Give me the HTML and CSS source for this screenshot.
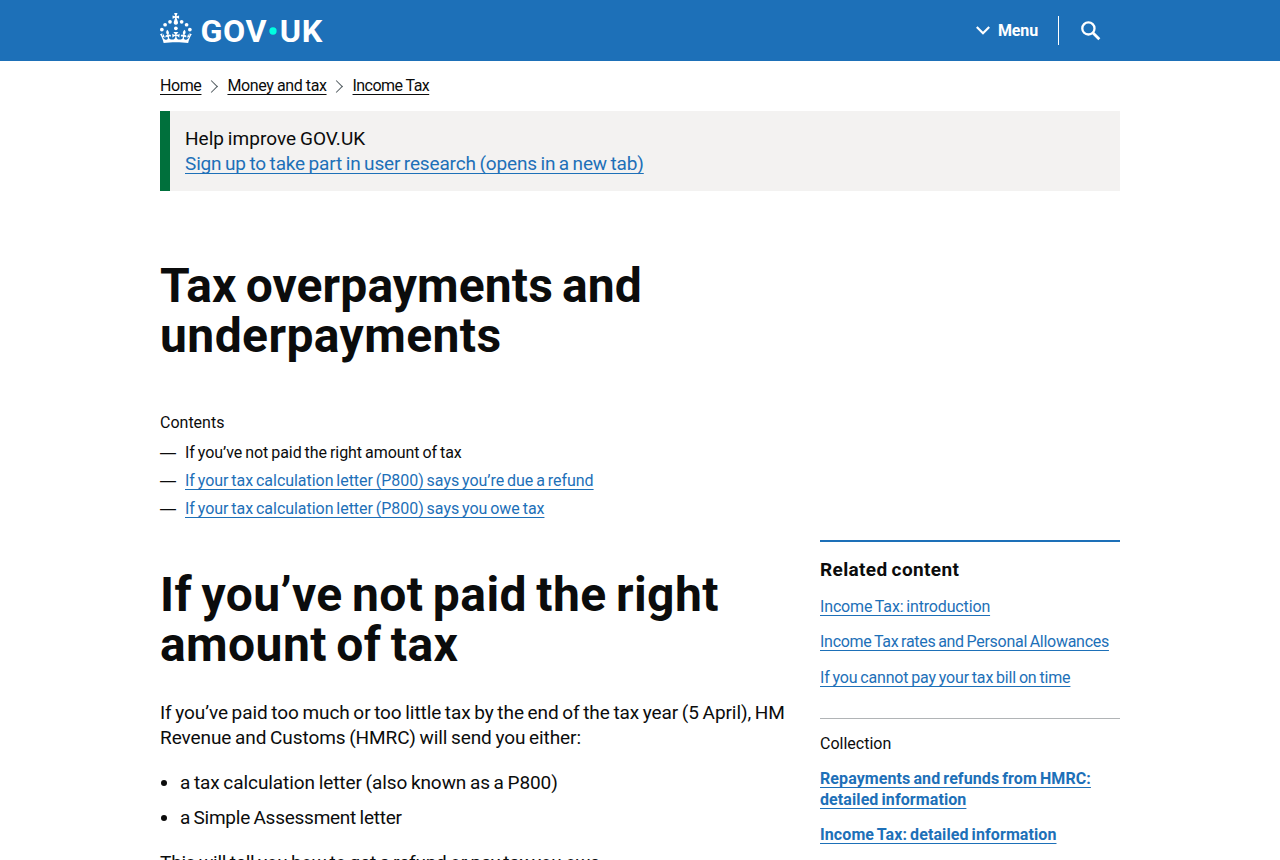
FILE: index.html
```
<!DOCTYPE html>
<html lang="en">
<head>
    <meta charset="UTF-8">
    <meta name="viewport" content="width=device-width, initial-scale=1.0">
    <title>Tax overpayments and underpayments - GOV.UK</title>
    <link rel="stylesheet" href="styles.css">
</head>
<body>
    <header class="header">
        <div class="container header-inner">
            <a class="logo" href="#">
                <svg width="164" height="30" viewBox="0 0 328 60" fill="#fff" role="img">
                    <!-- Crown -->
                    <circle cx="20" cy="17.6" r="3.7"/>
                    <circle cx="10.2" cy="23.5" r="3.7"/>
                    <circle cx="3.7" cy="33.2" r="3.7"/>
                    <circle cx="31.7" cy="30.6" r="3.7"/>
                    <circle cx="43.3" cy="17.6" r="3.7"/>
                    <circle cx="53.2" cy="23.5" r="3.7"/>
                    <circle cx="59.7" cy="33.2" r="3.7"/>
                    <path d="M33.1,9.8c.2-.1.3-.3.5-.5l4.6,2.4v-6.8l-4.6,1.5c-.1-.2-.3-.3-.5-.5l1.9-5.9h-6.7l1.9,5.9c-.2.1-.3.3-.5.5l-4.6-1.5v6.8l4.6-2.4c.1.2.3.3.5.5l-2.6,8c-.9,2.8,1.2,5.7,4.1,5.7h0c3,0,5.1-2.9,4.1-5.7l-2.6-8ZM37,37.9s-3.4,3.8-4.1,6.1c2.2,0,4.2-.5,6.4-2.8l-.7,8.5c-2-2.8-4.4-4.1-5.7-3.8.1,3.1.5,6.7,5.8,7.2,3.7.3,6.7-1.5,7-3.8.4-2.6-2-4.3-3.7-1.6-1.4-4.5,2.4-6.1,4.9-3.2-1.9-4.5-1.8-7.7,2.4-10.9,3,4,2.6,7.3-1.2,11.1,2.4-1.3,6.2,0,4,4.6-1.2-2.8-3.7-2.2-4.2.2-.3,1.7.7,3.7,3,4.2,1.9.3,4.7-.9,7-5.9-1.3,0-2.4.7-3.9,1.7l2.4-8c.6,2.3,1.4,3.7,2.2,4.5.6-1.6.5-2.8,0-5.3l5,1.8c-2.6,3.6-5.2,8.7-7.3,17.5-7.4-1.1-15.7-1.7-24.5-1.7h0c-8.8,0-17.1.6-24.5,1.7-2.1-8.9-4.7-13.9-7.3-17.5l5-1.8c-.5,2.5-.6,3.7,0,5.3.8-.8,1.6-2.3,2.2-4.5l2.4,8c-1.5-1-2.6-1.7-3.9-1.7,2.3,5,5.2,6.2,7,5.9,2.3-.4,3.3-2.4,3-4.2-.5-2.4-3-3.1-4.2-.2-2.2-4.6,1.6-6,4-4.6-3.7-3.7-4.2-7.1-1.2-11.1,4.2,3.2,4.3,6.4,2.4,10.9,2.5-2.8,6.3-1.3,4.9,3.2-1.8-2.7-4.1-1-3.7,1.6.3,2.3,3.3,4.1,7,3.8,5.4-.5,5.7-4.2,5.8-7.2-1.3-.2-3.7,1-5.7,3.8l-.7-8.5c2.2,2.3,4.2,2.7,6.4,2.8-.7-2.3-4.1-6.1-4.1-6.1h10.6,0Z"/>
                    <text class="logo-text" x="81" y="57" textLength="133" lengthAdjust="spacingAndGlyphs">GOV</text>
                    <circle cx="226" cy="36" r="7.3" fill="#00ffe0"/>
                    <text class="logo-text" x="239.5" y="57" textLength="86" lengthAdjust="spacingAndGlyphs">UK</text>
                </svg>
            </a>
            <nav class="header-nav">
                <a class="menu-link" href="#">
                    <svg width="14" height="9" viewBox="0 0 14 9" fill="none" stroke="#fff" stroke-width="2.2">
                        <path d="M0.8 1L7 7.2L13.2 1"/>
                    </svg>
                    <span>Menu</span>
                </a>
                <a class="search-link" href="#">
                    <svg width="20" height="20" viewBox="0 0 20 20" fill="none" stroke="#fff">
                        <circle cx="7.4" cy="7.4" r="6.1" stroke-width="2.3"/>
                        <path d="M11.8 11.8L18.3 18.3" stroke-width="2.8"/>
                    </svg>
                </a>
            </nav>
        </div>
    </header>

    <div class="container">
        <ol class="breadcrumbs">
            <li><a href="#">Home</a></li>
            <li><a href="#">Money and tax</a></li>
            <li><a class="crumb-last" href="#">Income Tax</a></li>
        </ol>

        <section class="banner">
            <h2>Help improve GOV.UK</h2>
            <a class="link" href="#">Sign up to take part in user research (opens in a new tab)</a>
        </section>

        <div class="intro">
            <h1 class="title"><span class="title-first">Tax overpayments and</span> underpayments</h1>
            <nav class="contents">
                <h2>Contents</h2>
                <ol>
                    <li>If you’ve not paid the right amount of tax</li>
                    <li><a class="link" href="#">If your tax calculation letter (P800) says you’re due a refund</a></li>
                    <li><a class="link" href="#">If your tax calculation letter (P800) says you owe tax</a></li>
                </ol>
            </nav>
        </div>

        <div class="columns">
            <main class="guide">
                <h1 class="part-title">If you’ve not paid the right amount of tax</h1>
                <p>If you’ve paid too much or too little tax by the end of the tax year (5 April), HM Revenue and Customs (HMRC) will send you either:</p>
                <ul>
                    <li>a tax calculation letter (also known as a P800)</li>
                    <li class="assessment">a Simple Assessment letter</li>
                </ul>
                <p class="next">This will tell you how to get a refund or pay tax you owe.</p>
            </main>

            <aside class="related">
                <h2>Related content</h2>
                <ul class="related-links">
                    <li><a class="link" href="#">Income Tax: introduction</a></li>
                    <li><a class="link allowances" href="#">Income Tax rates and Personal Allowances</a></li>
                    <li><a class="link" href="#">If you cannot pay your tax bill on time</a></li>
                </ul>
                <h3>Collection</h3>
                <ul class="collection-links">
                    <li><a class="link" href="#">Repayments and refunds from HMRC: detailed information</a></li>
                    <li><a class="link" href="#">Income Tax: detailed information</a></li>
                </ul>
            </aside>
        </div>
    </div>
</body>
</html>
```
FILE: styles.css
```
* {
    box-sizing: border-box;
}
body {
    margin: 0;
    height: 860px;
    overflow: hidden;
    font-family: Roboto, "Liberation Sans", sans-serif;
    font-size: 16px;
    line-height: 20px;
    color: #0b0c0c;
    background-color: #fff;
}
h1, h2, h3, p, ul, ol {
    margin: 0;
    padding: 0;
}
ol {
    list-style: none;
}
a {
    text-decoration: underline;
    text-decoration-thickness: 1px;
    text-underline-offset: 3px;
    text-decoration-skip-ink: none;
}
.link {
    color: #1d70b8;
}
.container {
    width: 960px;
    margin: 0 auto;
}

/* Header */
.header {
    height: 61px;
    background-color: #1d70b8;
}
.header-inner {
    display: flex;
    justify-content: space-between;
    align-items: flex-start;
}
.logo {
    display: block;
    height: 30px;
    margin-top: 13px;
}
.logo svg {
    display: block;
    overflow: visible;
}
.logo-text {
    font-family: Roboto, "Liberation Sans", sans-serif;
    font-size: 61px;
    font-weight: bold;
    letter-spacing: 1px;
}
.header-nav {
    display: flex;
    align-items: center;
    height: 29px;
    margin-top: 16px;
}
.header-nav a {
    display: flex;
    align-items: center;
    color: #fff;
    font-weight: bold;
    text-decoration: none;
}
.menu-link {
    gap: 8px;
    height: 29px;
    padding-right: 20px;
    border-right: 1px solid #fff;
    letter-spacing: -0.14px;
}
.search-link {
    padding: 0 19px 0 22px;
}

/* Breadcrumbs */
.breadcrumbs {
    display: flex;
    padding: 15px 0;
    letter-spacing: -0.4px;
}
.breadcrumbs li {
    display: flex;
    align-items: center;
}
.breadcrumbs li + li::before {
    content: "";
    width: 8px;
    height: 8px;
    margin: 0 11.5px 0 5.5px;
    border: solid #505a5f;
    border-width: 1px 1px 0 0;
    transform: rotate(45deg);
}
.breadcrumbs a {
    color: #0b0c0c;
}
.crumb-last {
    letter-spacing: -0.55px;
}

/* User research banner */
.banner {
    height: 80px;
    padding: 15px;
    border-left: 10px solid #00703c;
    background-color: #f3f2f1;
    font-size: 19px;
    line-height: 25px;
    letter-spacing: -0.15px;
    word-spacing: -1px;
}
.banner h2 {
    font-size: 19px;
    font-weight: normal;
    letter-spacing: 0.04px;
}

/* Title and contents list */
.intro {
    width: 630px;
    height: 349px;
    padding-top: 70px;
}
.title, .part-title {
    font-size: 48px;
    line-height: 50px;
    letter-spacing: 0.42px;
    word-spacing: -3px;
}
.title-first {
    letter-spacing: 0.1px;
}
.contents {
    margin-top: 52px;
}
.contents h2 {
    font-size: 16px;
    font-weight: normal;
}
.contents ol {
    padding-top: 10px;
    letter-spacing: -0.04px;
    word-spacing: -1px;
}
.contents li {
    display: flex;
    margin-bottom: 8px;
}
.contents li::before {
    content: "—";
    width: 25px;
    font-family: "Liberation Sans", sans-serif;
}

/* Guide text */
.columns {
    display: grid;
    grid-template-columns: 630px 300px;
    gap: 30px;
}
.guide {
    font-size: 19px;
    line-height: 25px;
    letter-spacing: -0.07px;
    word-spacing: -1px;
}
.part-title {
    padding: 30px 0;
}
.guide ul {
    margin: 20px 0;
    padding-left: 20px;
}
.guide li + li {
    margin-top: 10px;
}
.assessment {
    letter-spacing: -0.25px;
}
.next {
    letter-spacing: -0.2px;
}

/* Related content */
.related {
    padding-top: 15px;
    border-top: 2px solid #1d70b8;
    letter-spacing: -0.15px;
    word-spacing: -1px;
}
.related ul {
    list-style: none;
}
.related h2 {
    font-size: 19px;
    line-height: 25px;
    letter-spacing: 0.36px;
}
.related-links {
    padding: 15px 0 30.5px;
    border-bottom: 1px solid #b1b4b6;
}
.related-links li + li {
    margin-top: 15.25px;
}
.allowances {
    letter-spacing: -0.28px;
}
.related h3 {
    margin: 15px 0 14px;
    font-size: 16px;
    font-weight: normal;
    letter-spacing: 0;
}
.collection-links {
    font-weight: bold;
    line-height: 21px;
    letter-spacing: 0.09px;
}
.collection-links li + li {
    margin-top: 14px;
}
```
